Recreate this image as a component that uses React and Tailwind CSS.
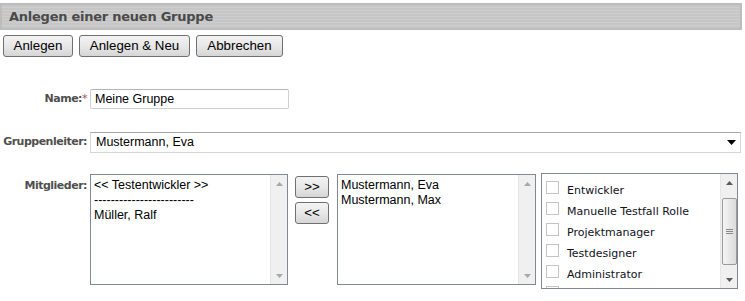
import React from "react";

const sans = { fontFamily: '"Liberation Sans", Arial, sans-serif' };

function Scrollbar({ thumb }) {
  return (
    <div className="w-[17px] h-full bg-[#f0f0f0] border-l border-[#e6e6e6] flex flex-col items-center justify-between shrink-0">
      <div className="h-[17px] w-full flex items-center justify-center">
        <svg width="7" height="4" viewBox="0 0 7 4">
          <path d="M0 4 L3.5 0 L7 4 Z" fill={thumb ? "#5a5a5a" : "#a8a8a8"} />
        </svg>
      </div>
      {thumb && (
        <div className="w-[15px] h-[67px] rounded-[2px] border border-[#9a9a9a] bg-gradient-to-r from-[#f4f4f4] to-[#dcdcdc] flex flex-col items-center justify-center gap-[1px]">
          <div className="w-[7px] h-px bg-[#888]" />
          <div className="w-[7px] h-px bg-[#888]" />
          <div className="w-[7px] h-px bg-[#888]" />
        </div>
      )}
      <div className="h-[17px] w-full flex items-center justify-center">
        <svg width="7" height="4" viewBox="0 0 7 4">
          <path d="M0 0 L7 0 L3.5 4 Z" fill={thumb ? "#5a5a5a" : "#a8a8a8"} />
        </svg>
      </div>
    </div>
  );
}

function Button({ children, className }) {
  return (
    <button
      className={
        "h-[22px] rounded-[3px] border border-[#707070] bg-gradient-to-b from-[#f3f3f3] via-[#e8e8e8] to-[#d6d6d6] text-[13.3px] text-black leading-none " +
        className
      }
      style={sans}
    >
      {children}
    </button>
  );
}

function Label({ children, className }) {
  return (
    <div
      className={
        "w-[87px] shrink-0 text-right font-bold text-[11px] tracking-[-0.5px] text-[#4f4f4f] " +
        (className || "")
      }
      style={{ fontFamily: '"DejaVu Sans", Verdana, sans-serif' }}
    >
      {children}
    </div>
  );
}

export default function App() {
  const roles = [
    "Entwickler",
    "Manuelle Testfall Rolle",
    "Projektmanager",
    "Testdesigner",
    "Administrator",
    "",
  ];

  return (
    <div className="w-[745px] h-[301px] bg-white overflow-hidden pt-[3px]">
      <div className="w-[742px] h-[27px] border-2 border-[#bdbdbd] bg-[repeating-linear-gradient(to_bottom,#c6c6c6_0px,#c6c6c6_2px,#cecece_2px,#cecece_3px)] flex items-center pl-[7px]">
        <span
          className="font-bold text-[13px] tracking-[-0.25px] text-[#4a4a4a]"
          style={{ fontFamily: '"DejaVu Sans", Verdana, sans-serif' }}
        >
          Anlegen einer neuen Gruppe
        </span>
      </div>

      <div className="flex gap-[6px] ml-[3px] mt-[5px]">
        <Button className="w-[70px]">Anlegen</Button>
        <Button className="w-[111px]">Anlegen &amp; Neu</Button>
        <Button className="w-[87px]">Abbrechen</Button>
      </div>

      <div className="mt-[32px] flex items-center gap-[3px]">
        <Label>
          Name:<span className="text-[#b04a4a] font-normal">*</span>
        </Label>
        <div
          className="w-[199px] h-[20px] border border-[#cfcfcf] border-t-[#b5b5b5] rounded-[2px] flex items-center pl-[4px] text-[12.5px] text-black"
          style={sans}
        >
          Meine Gruppe
        </div>
      </div>

      <div className="mt-[23px] flex items-center gap-[3px]">
        <Label>Gruppenleiter:</Label>
        <div
          className="w-[651px] h-[21px] border border-[#d6d6d6] border-t-[#a8a8a8] flex items-center justify-between pl-[5px] pr-[4px] text-[12.5px] text-black"
          style={sans}
        >
          <span>Mustermann, Eva</span>
          <svg width="9" height="5" viewBox="0 0 9 5">
            <path d="M0 0 L9 0 L4.5 5 Z" fill="#000" />
          </svg>
        </div>
      </div>

      <div className="mt-[21px] flex items-start">
        <Label className="pt-[4px]">Mitglieder:</Label>
        <div
          className="ml-[3px] w-[198px] h-[111px] border border-[#828790] flex text-[12.5px] text-black"
          style={sans}
        >
          <div className="flex-1 pl-[3px] pt-[3px] leading-[15px]">
            <div>&lt;&lt; Testentwickler &gt;&gt;</div>
            <div>------------------------</div>
            <div>Müller, Ralf</div>
          </div>
          <Scrollbar />
        </div>

        <div className="ml-[7px] mt-[2px] flex flex-col gap-[4px]">
          <Button className="w-[34px] h-[21px] text-[12px]">&gt;&gt;</Button>
          <Button className="w-[34px] h-[21px] text-[12px]">&lt;&lt;</Button>
        </div>

        <div
          className="ml-[8px] w-[199px] h-[111px] border border-[#828790] flex text-[12.5px] text-black"
          style={sans}
        >
          <div className="flex-1 pl-[3px] pt-[3px] leading-[15px]">
            <div>Mustermann, Eva</div>
            <div>Mustermann, Max</div>
          </div>
          <Scrollbar />
        </div>

        <div className="ml-[5px] -mt-[1px] w-[197px] h-[116px] border border-[#828790] flex overflow-hidden">
          <div className="flex-1 pl-[4px] pt-[7px]">
            {roles.map((r, i) => (
              <div key={i} className="h-[21px] flex items-start gap-[8px]">
                <div className="w-[13px] h-[13px] border border-[#c4c4c4] bg-white shrink-0" />
                <span
                  className="mt-[3px] text-[11px] leading-[14px] text-[#111122]"
                  style={{ fontFamily: '"DejaVu Sans", Verdana, sans-serif' }}
                >
                  {r}
                </span>
              </div>
            ))}
          </div>
          <Scrollbar thumb />
        </div>
      </div>
    </div>
  );
}
